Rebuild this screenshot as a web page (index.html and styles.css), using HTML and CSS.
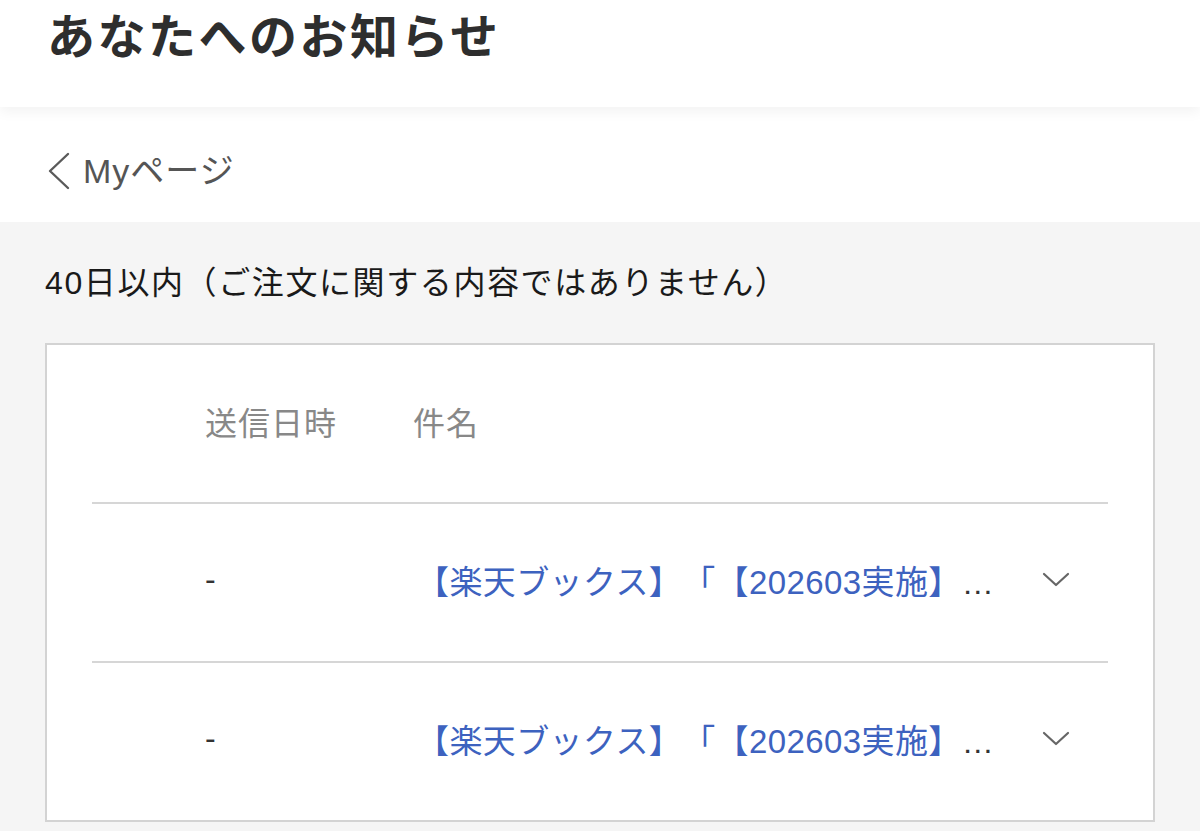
FILE: index.html
```html
<!DOCTYPE html>
<html lang="ja">
<head>
<meta charset="utf-8">
<title>あなたへのお知らせ</title>
<link rel="stylesheet" href="styles.css">
</head>
<body>
<header class="page-header">
  <h1 class="page-title">あなたへのお知らせ</h1>
</header>
<nav class="back-bar">
  <a class="back-link" href="#">
    <svg class="back-icon" width="24" height="38" viewBox="0 0 24 38" aria-hidden="true"><polyline points="21,2 3,19 21,36" fill="none" stroke="#5a5a5a" stroke-width="2.4" stroke-linecap="round" stroke-linejoin="round"/></svg>
    <span>Myページ</span>
  </a>
</nav>
<main class="content">
  <p class="period">40日以内（ご注文に関する内容ではありません）</p>
  <div class="notice-box">
    <div class="notice-row notice-head">
      <span class="col-spacer"></span>
      <span class="col-date">送信日時</span>
      <span class="col-subject">件名</span>
      <span class="col-toggle"></span>
    </div>
    <div class="notice-row">
      <span class="col-spacer"></span>
      <span class="col-date">-</span>
      <span class="col-subject"><a class="subject-link" href="#">【楽天ブックス】「【202603実施】</a><span class="ellipsis">…</span></span>
      <span class="col-toggle"><svg width="28" height="16" viewBox="0 0 28 16" aria-hidden="true"><polyline points="2,2 14,13 26,2" fill="none" stroke="#666" stroke-width="2.2" stroke-linecap="round" stroke-linejoin="round"/></svg></span>
    </div>
    <div class="notice-row">
      <span class="col-spacer"></span>
      <span class="col-date">-</span>
      <span class="col-subject"><a class="subject-link" href="#">【楽天ブックス】「【202603実施】</a><span class="ellipsis">…</span></span>
      <span class="col-toggle"><svg width="28" height="16" viewBox="0 0 28 16" aria-hidden="true"><polyline points="2,2 14,13 26,2" fill="none" stroke="#666" stroke-width="2.2" stroke-linecap="round" stroke-linejoin="round"/></svg></span>
    </div>
  </div>
</main>
</body>
</html>
```
FILE: styles.css
```css
* { box-sizing: border-box; }

html, body {
  margin: 0;
  padding: 0;
}

body {
  background: #f5f5f5;
  font-family: "Liberation Sans", "Noto Sans CJK JP", sans-serif;
  color: #222;
  overflow: hidden;
  height: 831px;
  text-spacing-trim: space-all;
}

.page-header {
  position: relative;
  z-index: 2;
  height: 107px;
  background: #fff;
  padding: 10px 47px 0;
  box-shadow: 0 5px 12px rgba(0, 0, 0, 0.05);
}

.page-title {
  margin: 0;
  font-size: 48px;
  line-height: 56px;
  font-weight: 700;
  color: #2e2e2e;
  letter-spacing: 2.5px;
}

.back-bar {
  height: 115px;
  background: #fff;
  padding: 45px 47px 0;
}

.back-link {
  display: flex;
  align-items: center;
  gap: 12px;
  color: #555;
  text-decoration: none;
  font-size: 34px;
  line-height: 38px;
  letter-spacing: 1px;
}

.back-icon {
  display: block;
  flex: none;
}

.content {
  padding: 41px 45px 0;
}

.period {
  margin: 0 0 40px;
  font-size: 32px;
  line-height: 40px;
  color: #1a1a1a;
  letter-spacing: 1.6px;
}

.notice-box {
  width: 1110px;
  background: #fff;
  border: 2px solid #d3d3d3;
  padding: 0 45px;
}

.notice-row {
  display: grid;
  grid-template-columns: 113px 208px 590px 1fr;
  align-items: center;
  height: 159px;
  padding-bottom: 6px;
  border-top: 2px solid #d6d6d6;
  font-size: 32px;
}

.notice-row.notice-head {
  border-top: none;
  height: 157px;
  color: #8a8a8a;
}

.col-date {
  color: #333;
}

.notice-head .col-date,
.notice-head .col-subject {
  color: #888;
  letter-spacing: 1px;
}

.col-subject {
  white-space: nowrap;
  color: #333;
}

.subject-link {
  padding-left: 3px;
  font-size: 33px;
  letter-spacing: 0.4px;
  color: #3d62bf;
  text-decoration: none;
}

.ellipsis {
  color: #333;
  margin-left: 0;
}

.col-toggle {
  display: flex;
  justify-content: center;
  align-items: center;
}

.col-toggle svg {
  display: block;
}
```
